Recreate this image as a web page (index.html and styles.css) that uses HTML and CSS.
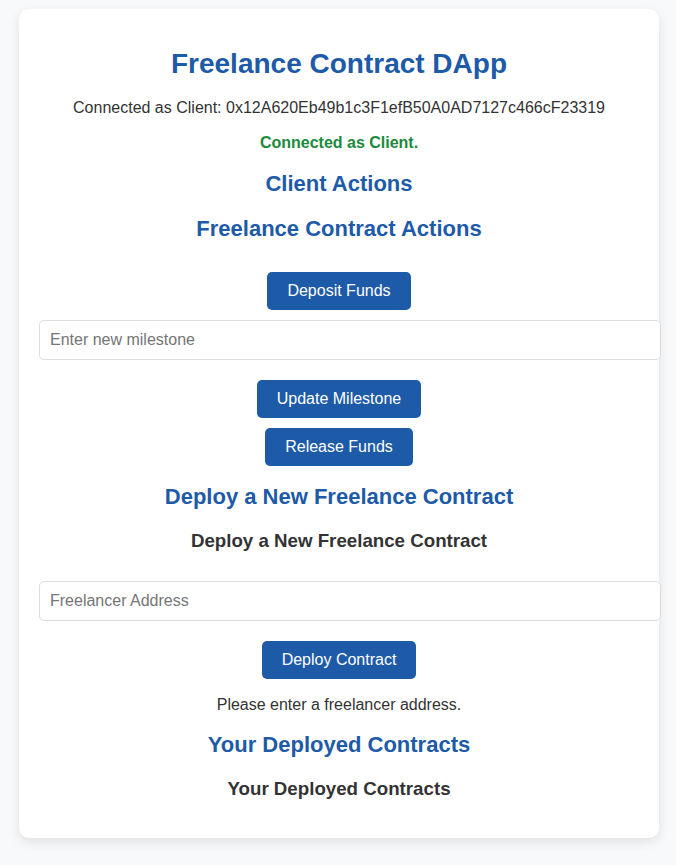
FILE: index.html
```
<!DOCTYPE html>
<html lang="en">
<head>
<meta charset="utf-8">
<title>Freelance Contract DApp</title>
<link rel="stylesheet" href="styles.css">
</head>
<body>
<div class="card">
  <h1 class="title">Freelance Contract DApp</h1>
  <p class="account">Connected as Client: 0x12A620Eb49b1c3F1efB50A0AD7127c466cF23319</p>
  <p class="status">Connected as Client.</p>

  <section class="client">
    <h2 class="heading">Client Actions</h2>
    <h2 class="heading">Freelance Contract Actions</h2>
    <div class="row first"><button class="btn">Deposit Funds</button></div>
    <input class="field" type="text" placeholder="Enter new milestone">
    <div class="row wide"><button class="btn">Update Milestone</button></div>
    <div class="row"><button class="btn">Release Funds</button></div>
  </section>

  <section class="deploy">
    <h2 class="heading">Deploy a New Freelance Contract</h2>
    <h3 class="subheading">Deploy a New Freelance Contract</h3>
    <input class="field spaced" type="text" placeholder="Freelancer Address">
    <div class="row wide"><button class="btn">Deploy Contract</button></div>
    <p class="note">Please enter a freelancer address.</p>
  </section>

  <section class="list">
    <h2 class="heading">Your Deployed Contracts</h2>
    <h3 class="subheading">Your Deployed Contracts</h3>
  </section>
</div>
</body>
</html>
```

FILE: styles.css
```
html, body {
  margin: 0;
  padding: 0;
  background: #f8f9fa;
  font-family: "Liberation Sans", Arial, sans-serif;
  color: #333;
}

body {
  padding: 9px 0 28px;
}

.card {
  width: 600px;
  margin: 0 auto;
  padding: 20px;
  background: #fff;
  border-radius: 10px;
  box-shadow: 0 4px 12px rgba(0, 0, 0, 0.1);
  text-align: center;
  position: relative;
  left: 1px;
}

.title {
  font-size: 28px;
  color: #1d5aa8;
  margin: 19px 0 19px;
  line-height: 32px;
}

.account {
  font-size: 16px;
  margin: 19px 0 17px;
}

.status {
  font-size: 16px;
  font-weight: bold;
  color: #1a8a3c;
  margin: 17px 0;
}

.heading {
  font-size: 22px;
  color: #1d5aa8;
  margin: 18px 0;
}

.client .heading:first-child {
  margin-top: 19px;
}

.client .heading + .heading {
  margin-top: 19px;
}

.subheading {
  font-size: 18.72px;
  color: #333;
  margin: 18.72px 0;
}

.deploy .subheading {
  margin-top: 19.72px;
}

.list .subheading {
  margin-top: 20px;
}

.row {
  display: flex;
  justify-content: center;
  margin-top: 10px;
}

.row.first {
  margin-top: 30px;
}

.row.wide {
  margin-top: 20px;
}

.btn {
  font-family: "Liberation Sans", Arial, sans-serif;
  font-size: 16px;
  line-height: 18px;
  padding: 10px 20px;
  background: #1d5aa8;
  color: #fff;
  border: none;
  border-radius: 5px;
  cursor: pointer;
}

.field {
  display: block;
  width: 100%;
  margin: 10px 0 0;
  padding: 10px;
  font-family: "Liberation Sans", Arial, sans-serif;
  font-size: 16px;
  line-height: 18px;
  border: 1px solid #ddd;
  border-radius: 5px;
  color: #333;
  background: #fff;
}

.field::placeholder {
  color: #757575;
}

.field.spaced {
  margin-top: 29px;
}

.note {
  font-size: 16px;
  margin: 17px 0 16px;
}
```
